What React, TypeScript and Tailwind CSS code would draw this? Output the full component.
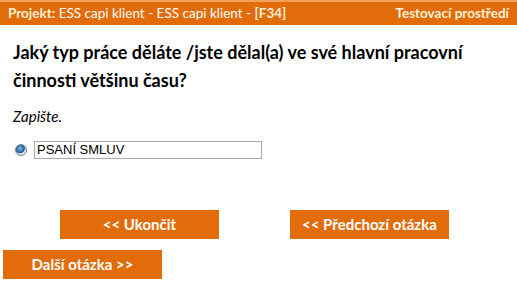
import { useState } from "react";

const font = { fontFamily: "Lato, 'Open Sans', sans-serif" };

const OrangeButton = ({ label, className = "" }: { label: string; className?: string }) => (
  <button
    className={`h-[29px] w-[159px] bg-[#e36c0a] text-white text-[15px] font-bold ${className}`}
    style={font}
  >
    {label}
  </button>
);

export default function App() {
  const [value, setValue] = useState("PSANÍ SMLUV");

  return (
    <div className="w-[517px] h-[290px] bg-white overflow-hidden" style={font}>
      {/* Header */}
      <div className="border-t-2 border-[#f0a15a] bg-[#e36c0a] h-[25px] flex items-center justify-between px-2 text-[13.5px] text-white">
        <div>
          <span className="font-bold text-[#fdf0d8]">Projekt:</span> ESS capi klient - ESS capi klient -{" "}
          <span className="font-bold text-[#fdf0d8]">[F34]</span>
        </div>
        <div className="font-bold text-[#fdf0d8]">Testovací prostředí</div>
      </div>

      {/* Question */}
      <div className="px-[13px] pt-[13px]">
        <h1 className="text-[18px] font-bold leading-[28px] text-black">
          Jaký typ práce děláte /jste dělal(a) ve své hlavní pracovní činnosti většinu času?
        </h1>
        <p className="mt-[12px] text-[15px] leading-[20px] italic text-black">Zapište.</p>

        <div className="mt-[15px] flex items-center gap-[7px] pl-[2px]">
          <span className="w-[12px] h-[12px] rounded-full border border-[#6b7f93] bg-[radial-gradient(circle_at_40%_35%,#7fb8e8,#1f5c9a_50%,#dfe6ee_58%)] shrink-0" />
          <input
            value={value}
            onChange={(e) => setValue(e.target.value)}
            className="w-[228px] h-[18px] border border-[#a9a9a9] px-[2px] text-[13px] text-black outline-none"
            style={{ fontFamily: "'Liberation Sans', Arial, sans-serif" }}
          />
        </div>
      </div>

      {/* Buttons */}
      <div className="mt-[51px] flex gap-[71px] pl-[60px]">
        <OrangeButton label="<< Ukončit" />
        <OrangeButton label="<< Předchozí otázka" />
      </div>
      <div className="mt-[11px] pl-[3px]">
        <OrangeButton label="Další otázka >>" />
      </div>
    </div>
  );
}
